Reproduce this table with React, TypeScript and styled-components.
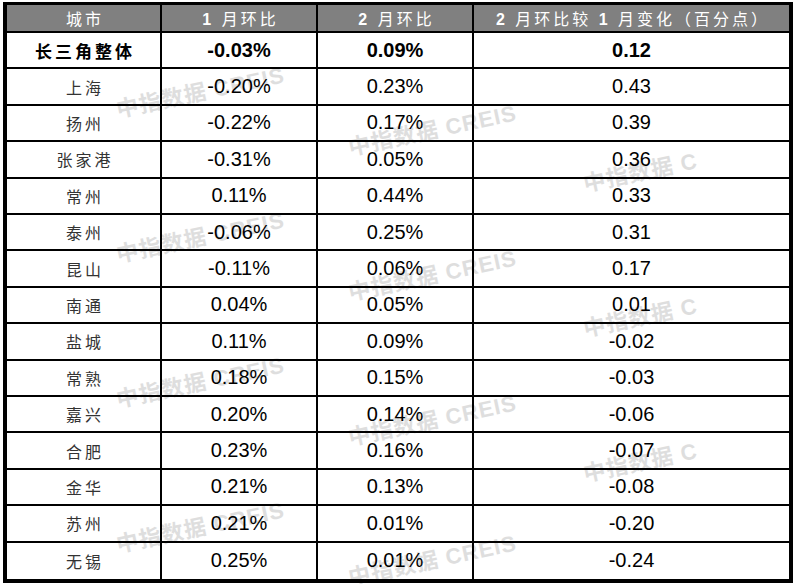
import styled, { createGlobalStyle } from 'styled-components'

const GlobalStyle = createGlobalStyle`
  html, body {
    margin: 0;
    padding: 0;
    background: #fff;
  }
  body {
    font-family: "Liberation Sans", "Noto Sans CJK SC", sans-serif;
  }
`

const Page = styled.div`
  position: relative;
  width: 794px;
  height: 584px;
  padding: 2px 1px 1px 3px;
  box-sizing: border-box;
`

const Table = styled.div`
  position: relative;
  z-index: 1;
  display: grid;
  grid-template-columns: 155px 156px 156px 1fr;
  grid-template-rows: 28px repeat(15, 1fr);
  height: 100%;
  border: 4px solid #000;
  border-top-width: 3px;
  box-sizing: border-box;
`

const Cell = styled.div<{ $lastCol?: boolean; $lastRow?: boolean }>`
  display: flex;
  align-items: center;
  justify-content: center;
  min-width: 0;
  border-right: ${({ $lastCol }) => ($lastCol ? 'none' : '2px solid #000')};
  border-bottom: ${({ $lastRow }) => ($lastRow ? 'none' : '2px solid #000')};
  white-space: nowrap;
`

const HeadCell = styled(Cell)`
  background: #808080;
  color: #fff;
  font-size: 16px;
  letter-spacing: 3px;
  padding-left: 3px;
`

const HeadNum = styled.b`
  font-weight: 700;
`

const CityCell = styled(Cell)<{ $bold?: boolean }>`
  font-size: ${({ $bold }) => ($bold ? '17px' : '16px')};
  letter-spacing: 3px;
  padding-left: 3px;
  font-weight: ${({ $bold }) => ($bold ? 700 : 400)};
  color: ${({ $bold }) => ($bold ? '#000' : '#333')};
`

const NumCell = styled(Cell)<{ $bold?: boolean }>`
  font-size: 20px;
  font-weight: ${({ $bold }) => ($bold ? 700 : 400)};
  color: #000;
`

const Watermark = styled.span<{ $x: number; $y: number }>`
  position: absolute;
  z-index: 0;
  left: ${({ $x }) => $x}px;
  top: ${({ $y }) => $y}px;
  transform: translate(-50%, -50%) rotate(-12deg);
  font-size: 22px;
  font-weight: 700;
  letter-spacing: 1px;
  color: #dedede;
  white-space: nowrap;
`

type Row = [string, string, string, string]

const rows: Row[] = [
  ['长三角整体', '-0.03%', '0.09%', '0.12'],
  ['上海', '-0.20%', '0.23%', '0.43'],
  ['扬州', '-0.22%', '0.17%', '0.39'],
  ['张家港', '-0.31%', '0.05%', '0.36'],
  ['常州', '0.11%', '0.44%', '0.33'],
  ['泰州', '-0.06%', '0.25%', '0.31'],
  ['昆山', '-0.11%', '0.06%', '0.17'],
  ['南通', '0.04%', '0.05%', '0.01'],
  ['盐城', '0.11%', '0.09%', '-0.02'],
  ['常熟', '0.18%', '0.15%', '-0.03'],
  ['嘉兴', '0.20%', '0.14%', '-0.06'],
  ['合肥', '0.23%', '0.16%', '-0.07'],
  ['金华', '0.21%', '0.13%', '-0.08'],
  ['苏州', '0.21%', '0.01%', '-0.20'],
  ['无锡', '0.25%', '0.01%', '-0.24'],
]

const marks: { x: number; y: number; text: string }[] = [
  ...[90, 235, 380, 525].map(y => ({ x: 200, y, text: '中指数据 CREIS' })),
  ...[128, 273, 418, 558].map(y => ({ x: 432, y, text: '中指数据 CREIS' })),
  ...[170, 315, 460].map(y => ({ x: 640, y, text: '中指数据 C' })),
]

export default function App() {
  return (
    <Page>
      <GlobalStyle />
      {marks.map(m => (
        <Watermark key={`${m.x}-${m.y}`} $x={m.x} $y={m.y}>
          {m.text}
        </Watermark>
      ))}
      <Table>
        <HeadCell>
          <span>城市</span>
        </HeadCell>
        <HeadCell>
          <span>
            <HeadNum>1</HeadNum> 月环比
          </span>
        </HeadCell>
        <HeadCell>
          <span>
            <HeadNum>2</HeadNum> 月环比
          </span>
        </HeadCell>
        <HeadCell $lastCol>
          <span>
            <HeadNum>2</HeadNum> 月环比较 <HeadNum>1</HeadNum> 月变化（百分点）
          </span>
        </HeadCell>
        {rows.map((row, i) => {
          const bold = i === 0
          const last = i === rows.length - 1
          return [
            <CityCell key={`${row[0]}-c`} $bold={bold} $lastRow={last}>
              {row[0]}
            </CityCell>,
            <NumCell key={`${row[0]}-1`} $bold={bold} $lastRow={last}>
              {row[1]}
            </NumCell>,
            <NumCell key={`${row[0]}-2`} $bold={bold} $lastRow={last}>
              {row[2]}
            </NumCell>,
            <NumCell key={`${row[0]}-3`} $bold={bold} $lastRow={last} $lastCol>
              {row[3]}
            </NumCell>,
          ]
        })}
      </Table>
    </Page>
  )
}
